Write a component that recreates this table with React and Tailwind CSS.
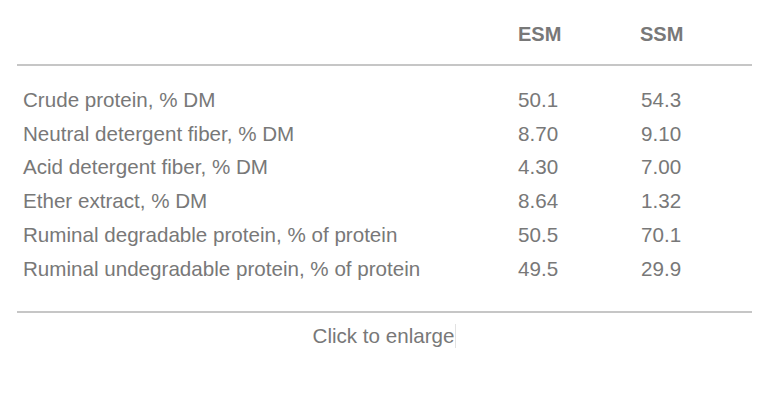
export default function App() {
  const rows = [
    ["Crude protein, % DM", "50.1", "54.3"],
    ["Neutral detergent fiber, % DM", "8.70", "9.10"],
    ["Acid detergent fiber, % DM", "4.30", "7.00"],
    ["Ether extract, % DM", "8.64", "1.32"],
    ["Ruminal degradable protein, % of protein", "50.5", "70.1"],
    ["Ruminal undegradable protein, % of protein", "49.5", "29.9"],
  ];
  return (
    <div
      className="w-[768px] h-[404px] bg-white text-[#787878] overflow-hidden"
      style={{ fontFamily: '"Liberation Sans", Arial, sans-serif' }}
    >
      <div className="ml-[17px] w-[735px]">
        <div className="grid grid-cols-[495px_122px_1fr] pl-[6px] pt-[22px] h-[64px] text-[20px] leading-[24px] font-bold">
          <div></div>
          <div>ESM</div>
          <div>SSM</div>
        </div>
        <div className="h-[2px] bg-[#c6c6c6]"></div>
        <div className="pt-[17px] pb-[26px]">
          {rows.map((r) => (
            <div
              key={r[0]}
              className="grid grid-cols-[495px_123px_1fr] pl-[6px] text-[20.6px] leading-[33.7px]"
            >
              <div>{r[0]}</div>
              <div>{r[1]}</div>
              <div>{r[2]}</div>
            </div>
          ))}
        </div>
        <div className="h-[2px] bg-[#c6c6c6]"></div>
        <div className="mt-[11px] flex justify-center items-center text-[20.6px] leading-[24px]">
          <span>Click to enlarge</span>
          <span className="inline-block w-px h-[24px] bg-[#e2e2e2] ml-[1px]"></span>
        </div>
      </div>
    </div>
  );
}
